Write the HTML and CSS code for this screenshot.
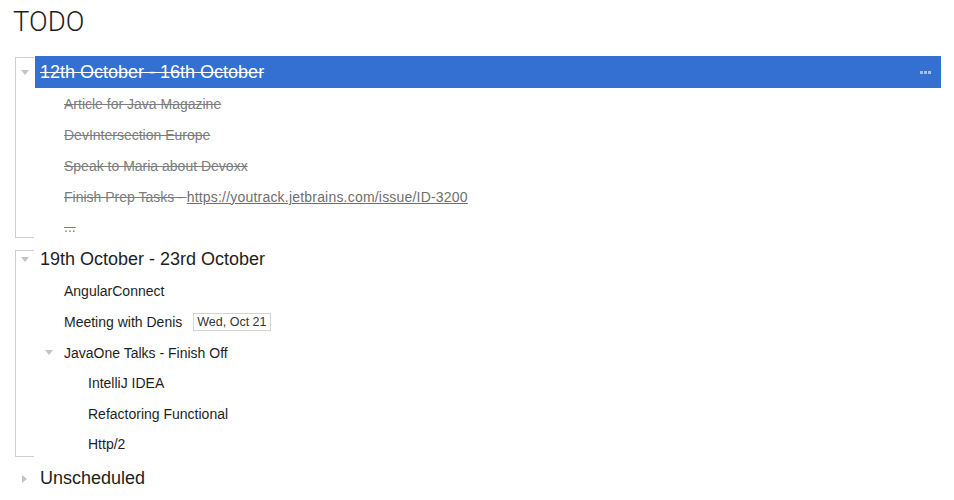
FILE: index.html
```html
<!DOCTYPE html>
<html>
<head>
<meta charset="utf-8">
<link rel="stylesheet" href="styles.css">
</head>
<body>
<div class="page">
  <h1 class="title">TODO</h1>

  <div class="group group-first">
    <div class="row head">
      <span class="toggle"><svg width="8" height="5" viewBox="0 0 8 5"><path d="M0 0H8L4 5Z" fill="#c4c4c4"/></svg></span>
      <div class="label selected">
        <span class="done-head">12th October - 16th October</span>
        <span class="dots"><i></i><i></i><i></i></span>
      </div>
    </div>
    <div class="row item lvl1"><span class="label done">Article for Java Magazine</span></div>
    <div class="row item lvl1"><span class="label done">DevIntersection Europe</span></div>
    <div class="row item lvl1"><span class="label done">Speak to Maria about Devoxx</span></div>
    <div class="row item lvl1"><span class="label"><span class="done">Finish Prep Tasks - </span><a class="link">https://youtrack.jetbrains.com/issue/ID-3200</a></span></div>
    <div class="row item lvl1 more"><span class="label done">...</span></div>
  </div>

  <div class="group group-second">
    <div class="row head">
      <span class="toggle"><svg width="8" height="5" viewBox="0 0 8 5"><path d="M0 0H8L4 5Z" fill="#c4c4c4"/></svg></span>
      <span class="label">19th October - 23rd October</span>
    </div>
    <div class="row item lvl1"><span class="label">AngularConnect</span></div>
    <div class="row item lvl1"><span class="label">Meeting with Denis</span><span class="date">Wed, Oct 21</span></div>
    <div class="row item lvl1 parent">
      <span class="toggle"><svg width="8" height="5" viewBox="0 0 8 5"><path d="M0 0H8L4 5Z" fill="#c4c4c4"/></svg></span>
      <span class="label">JavaOne Talks - Finish Off</span>
    </div>
    <div class="row item lvl2"><span class="label">IntelliJ IDEA</span></div>
    <div class="row item lvl2"><span class="label">Refactoring Functional</span></div>
    <div class="row item lvl2"><span class="label">Http/2</span></div>
  </div>

  <div class="group group-collapsed">
    <div class="row head">
      <span class="toggle toggle-right"><svg width="5" height="8" viewBox="0 0 5 8"><path d="M0 0V8L5 4Z" fill="#c4c4c4"/></svg></span>
      <span class="label">Unscheduled</span>
    </div>
  </div>
</div>
</body>
</html>
```

FILE: styles.css
```css
html, body {
  margin: 0;
  padding: 0;
  background: #ffffff;
}

body {
  font-family: "Liberation Sans", Arial, sans-serif;
  color: #222222;
  width: 954px;
  height: 500px;
  overflow: hidden;
}

.page {
  padding: 6px 13px 0 15px;
}

.title {
  margin: 0 0 0 -2px;
  font-family: Roboto, "Liberation Sans", sans-serif;
  font-weight: 300;
  font-size: 27.5px;
  line-height: 32px;
  height: 32px;
  color: #1e1e1e;
  letter-spacing: 0;
}

.group {
  position: relative;
}

.group-first {
  margin-top: 18px;
}

.group-second {
  margin-top: 5px;
}

.group-first::before,
.group-second::before {
  content: "";
  position: absolute;
  left: 0;
  width: 18px;
  border-left: 1px solid #cfcfcf;
  border-top: 1px solid #cfcfcf;
  border-bottom: 1px solid #cfcfcf;
  pointer-events: none;
}

.group-first::before {
  top: 1px;
  bottom: 0;
}

.group-second::before {
  top: 7px;
  bottom: 3px;
}

.row {
  display: flex;
  align-items: center;
}

.toggle {
  width: 20px;
  flex: 0 0 20px;
  display: flex;
  align-items: center;
  justify-content: center;
}

.toggle-right {
  justify-content: flex-start;
  padding-left: 7px;
  box-sizing: border-box;
}

.toggle svg {
  display: block;
}

.head {
  height: 32px;
}

.head .label {
  font-size: 18px;
  padding-left: 5px;
  color: #1e1e1e;
}

.head .label.selected {
  flex: 1;
  height: 32px;
  display: flex;
  align-items: center;
  justify-content: space-between;
  background: #3370d1;
  color: #ffffff;
  padding-right: 10px;
}

.done-head {
  text-decoration: line-through;
}

.dots {
  display: flex;
  gap: 1px;
}

.dots i {
  display: block;
  width: 3px;
  height: 3px;
  background: #a7c0ea;
}

.item {
  height: 31px;
  font-size: 14px;
}

.item .label {
  color: #1e1e1e;
}

.lvl1 {
  padding-left: 49px;
}

.lvl2 {
  padding-left: 73px;
}

.lvl1.parent {
  padding-left: 24px;
}

.parent .label {
  padding-left: 5px;
}

.item .label.done,
.item .done {
  color: #7d7d7d;
  text-decoration: line-through;
}

.link {
  color: #6f6f6f;
  text-decoration: underline;
  letter-spacing: 0.2px;
}

.more {
  height: 26px;
  align-items: flex-end;
  padding-bottom: 3px;
  box-sizing: border-box;
}

.date {
  margin-left: 11px;
  border: 1px solid #d4d4d4;
  font-size: 12.5px;
  line-height: 16px;
  padding: 0 3px;
  color: #333333;
}

.group-second .lvl2 {
  height: 30.5px;
}

.group-collapsed {
  margin-top: 3px;
}
```
